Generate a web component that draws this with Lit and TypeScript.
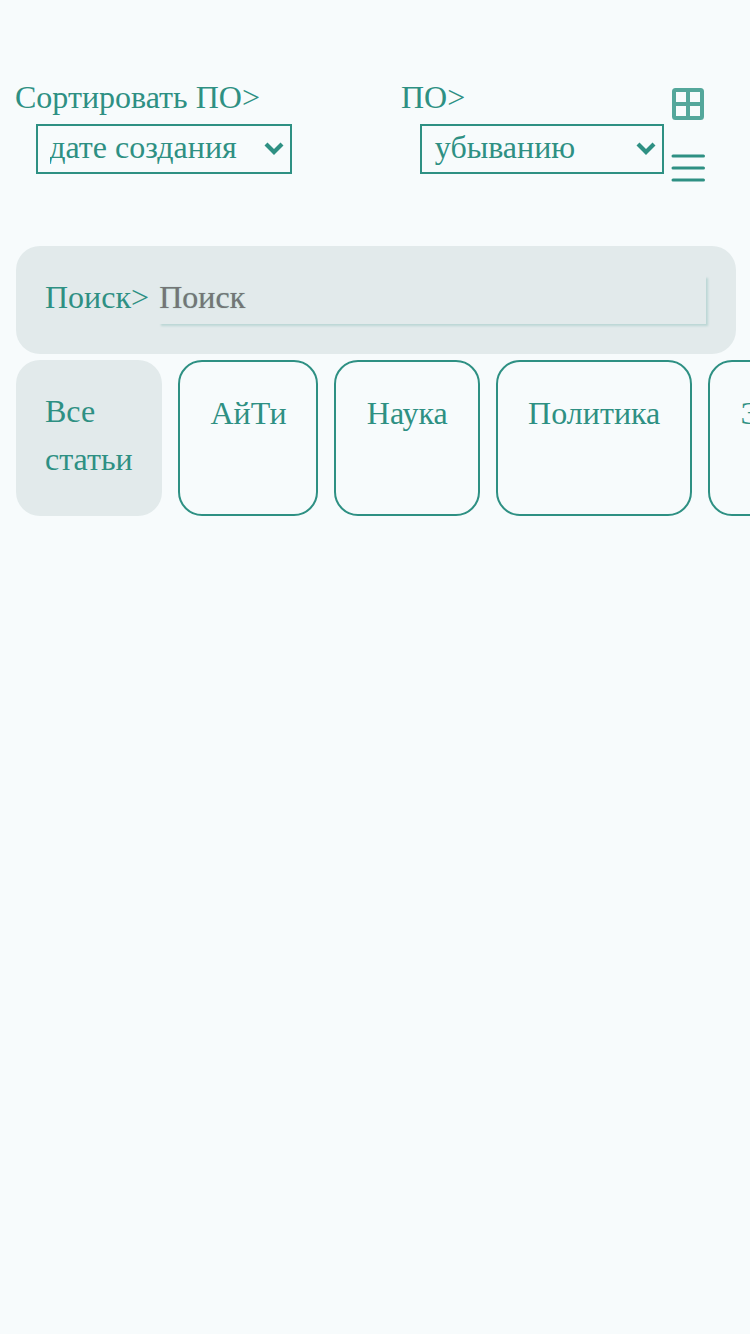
import { LitElement, html, css } from "lit";
import { customElement } from "lit/decorators.js";

const chevron = html`<svg class="chevron" width="20" height="14" viewBox="0 0 20 14">
  <path d="M2 2 L10 10 L18 2" fill="none" stroke="currentColor" stroke-width="4.2" />
</svg>`;

@customElement("app-root")
export class AppRoot extends LitElement {
  static styles = css`
    :host {
      display: block;
      box-sizing: border-box;
      height: 1334px;
      overflow: hidden;
      padding: 73px 0 0;
      background: #f7fbfc;
      color: #2e9083;
      font: 32px/48px "Liberation Serif", serif;
    }
    * { box-sizing: border-box; }
    .sort {
      display: grid;
      grid-template-columns: 386px 271px auto;
      height: 173px;
      padding-left: 15px;
    }
    .label { height: 51px; white-space: nowrap; }
    .select {
      display: flex;
      align-items: center;
      justify-content: space-between;
      height: 50px;
      padding: 0 6px 0 12px;
      border: 2px solid #2e9083;
    }
    .by { width: 256px; margin-left: 21px; }
    .order { width: 244px; margin-left: 19px; }
    .value { line-height: 42px; height: 46px; overflow: hidden; white-space: nowrap; }
    .by .value { text-indent: -0.8px; }
    .order .value { padding-left: 0.8px; }
    .chevron { display: block; }
    .views {
      display: flex;
      flex-direction: column;
      gap: 32px;
      padding-top: 15px;
    }
    .views svg { display: block; }
    .search {
      display: flex;
      width: 720px;
      height: 108px;
      margin: 0 0 6px 16px;
      padding: 27px 29px 0;
      border-radius: 24px;
      background: #e2eaeb;
      white-space: pre;
    }
    .field {
      width: 547px;
      height: 48px;
      margin: 3px 0 0 10.2px;
      line-height: 42px;
      color: #757575;
      text-shadow: 0 0 1px rgba(46, 144, 131, 0.6);
      box-shadow: 2.4px 2.2px 2px rgba(46, 144, 131, 0.21);
    }
    .tabs { display: flex; gap: 16px; padding-left: 16px; }
    .tab {
      flex: none;
      height: 156px;
      padding: 27px 29.95px 27px 30.4px;
      border: 2px solid #2e9083;
      border-radius: 24px;
    }
    .active {
      width: 146px;
      padding: 27px 29px;
      border: 0;
      background: #e2eaeb;
    }
  `;

  render() {
    return html`
      <div class="sort">
        <div>
          <div class="label">Сортировать ПО&gt;</div>
          <div class="select by"><span class="value">дате создания</span>${chevron}</div>
        </div>
        <div>
          <div class="label">ПО&gt;</div>
          <div class="select order"><span class="value">убыванию</span>${chevron}</div>
        </div>
        <div class="views">
          <svg width="34" height="32" viewBox="0 0 34 32">
            <path fill="#54a79b" fill-rule="evenodd" d="M3.5 0H28.5Q32 0 32 3.5V28.5Q32 32 28.5 32H3.5Q0 32 0 28.5V3.5Q0 0 3.5 0ZM4 4V14H14V4ZM18 4V14H28V4ZM4 18V28H14V18ZM18 18V28H28V18Z" />
          </svg>
          <svg width="36" height="32" viewBox="0 0 36 32" overflow="visible">
            <path d="M1 4H31.5M1 16H31.5M1 28H31.5" stroke="#2e9083" stroke-width="3" stroke-linecap="round" />
          </svg>
        </div>
      </div>
      <div class="search"><span>Поиск&gt;</span><div class="field">Поиск</div></div>
      <div class="tabs">
        <div class="tab active">Все статьи</div>
        <div class="tab">АйТи</div>
        <div class="tab">Наука</div>
        <div class="tab">Политика</div>
        <div class="tab">Экономика</div>
      </div>
    `;
  }
}
